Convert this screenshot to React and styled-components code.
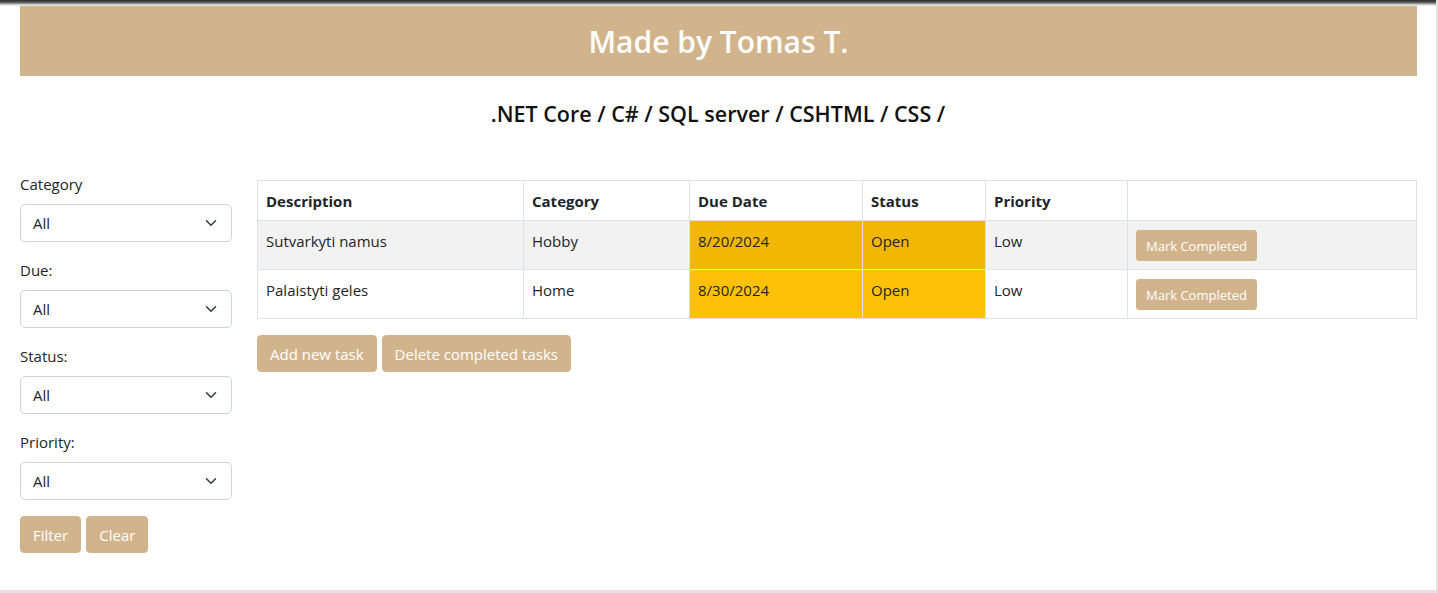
import styled, { createGlobalStyle } from "styled-components";

const GlobalStyle = createGlobalStyle`
    html, body {
        margin: 0;
        padding: 0;
        background: #fff;
        font-family: "Open Sans", "Noto Sans", sans-serif;
        color: #212529;
    }
    * { box-sizing: border-box; }
`;

const filters = ["Category", "Due:", "Status:", "Priority:"];

const tasks = [
    { id: 1, description: "Sutvarkyti namus", category: "Hobby", due: "8/20/2024", status: "Open", priority: "Low" },
    { id: 2, description: "Palaistyti geles", category: "Home", due: "8/30/2024", status: "Open", priority: "Low" },
];

const Chevron = () => (
    <svg width="12" height="12" viewBox="0 0 16 16" fill="none">
        <path d="M2 5l6 6 6-6" stroke="#343a40" strokeWidth="2" strokeLinecap="round" strokeLinejoin="round" />
    </svg>
);

const App = () => {
    return (
        <>
            <GlobalStyle />
            <Frame>
                <TopShade />
                <Banner>Made by Tomas T.</Banner>
                <Stack>.NET Core / C# / SQL server / CSHTML / CSS /</Stack>
                <Main>
                    <Sidebar>
                        {filters.map(f => (
                            <Field key={f}>
                                <Label>{f}</Label>
                                <Select>
                                    <span>All</span>
                                    <Chevron />
                                </Select>
                            </Field>
                        ))}
                        <ButtonRow>
                            <Button>Filter</Button>
                            <Button>Clear</Button>
                        </ButtonRow>
                    </Sidebar>
                    <Content>
                        <Table>
                            <colgroup>
                                <col style={{ width: 266 }} />
                                <col style={{ width: 166 }} />
                                <col style={{ width: 173 }} />
                                <col style={{ width: 123 }} />
                                <col style={{ width: 142 }} />
                                <col />
                            </colgroup>
                            <thead>
                                <tr>
                                    <Th>Description</Th>
                                    <Th>Category</Th>
                                    <Th>Due Date</Th>
                                    <Th>Status</Th>
                                    <Th>Priority</Th>
                                    <Th></Th>
                                </tr>
                            </thead>
                            <tbody>
                                {tasks.map((t, i) => (
                                    <Row key={t.id} striped={i % 2 === 0}>
                                        <Td>{t.description}</Td>
                                        <Td>{t.category}</Td>
                                        <Td warn>{t.due}</Td>
                                        <Td warn>{t.status}</Td>
                                        <Td>{t.priority}</Td>
                                        <Td><SmallButton>Mark Completed</SmallButton></Td>
                                    </Row>
                                ))}
                            </tbody>
                        </Table>
                        <ButtonRow>
                            <Button>Add new task</Button>
                            <Button>Delete completed tasks</Button>
                        </ButtonRow>
                    </Content>
                </Main>
            </Frame>
        </>
    );
};

const Frame = styled.div`
    height: 593px;
    border-right: 2px solid #e3e3e3;
    border-bottom: 3px solid #efdde4;
    overflow: hidden;
`;

const TopShade = styled.div`
    height: 6px;
    background: linear-gradient(#2b2b2b 0%, #5a5a5a 40%, #c9c9c9 75%, #f4f4f4 100%);
`;

const Banner = styled.h1`
    margin: 0 19px 0 20px;
    height: 70px;
    background: #d2b48c;
    color: #fff;
    display: flex;
    align-items: center;
    justify-content: center;
    font-size: 30px;
    font-weight: 600;
`;

const Stack = styled.h2`
    margin: 26px 0 0;
    text-align: center;
    font-size: 21.5px;
    line-height: 24px;
    font-weight: 600;
    color: #111;
`;

const Main = styled.div`
    display: flex;
    gap: 25px;
    padding: 0 19px 0 20px;
    margin-top: 46px;
`;

const Sidebar = styled.div`
    width: 212px;
    flex-shrink: 0;
`;

const Field = styled.div`
    margin-bottom: 16px;
`;

const Label = styled.div`
    font-size: 15px;
    line-height: 24px;
    margin-bottom: 8px;
`;

const Select = styled.div`
    height: 38px;
    border: 1px solid #ced4da;
    border-radius: 5px;
    display: flex;
    align-items: center;
    justify-content: space-between;
    padding: 0 14px 0 12px;
    font-size: 15px;
`;

const ButtonRow = styled.div`
    display: flex;
    gap: 5px;
`;

const Button = styled.button`
    height: 37px;
    padding: 0 12px;
    background: #d2b48c;
    border: 1px solid #d2b48c;
    border-radius: 4px;
    color: #fff;
    font-family: inherit;
    font-size: 15px;
`;

const Content = styled.div`
    flex: 1;
    padding-top: 8px;
`;

const Table = styled.table`
    width: 100%;
    border-collapse: collapse;
    table-layout: fixed;
    margin-bottom: 16px;
    font-size: 15px;
`;

const Th = styled.th`
    border: 1px solid #dee2e6;
    text-align: left;
    padding: 8px 8px 7px;
    line-height: 24px;
    font-weight: 700;
`;

const Row = styled.tr`
    background: ${p => p.striped ? "#f2f2f2" : "#fff"};
    --warn: ${p => p.striped ? "#f2b705" : "#ffc107"};
`;

const Td = styled.td`
    border: 1px solid #dee2e6;
    padding: 8px;
    height: 47px;
    line-height: 24px;
    vertical-align: top;
    background: ${p => p.warn ? "var(--warn)" : "transparent"};
`;

const SmallButton = styled.button`
    height: 31px;
    margin-top: 1px;
    padding: 0 9px;
    background: #d2b48c;
    border: 1px solid #d2b48c;
    border-radius: 3px;
    color: #fff;
    font-family: inherit;
    font-size: 13px;
`;

export default App;
